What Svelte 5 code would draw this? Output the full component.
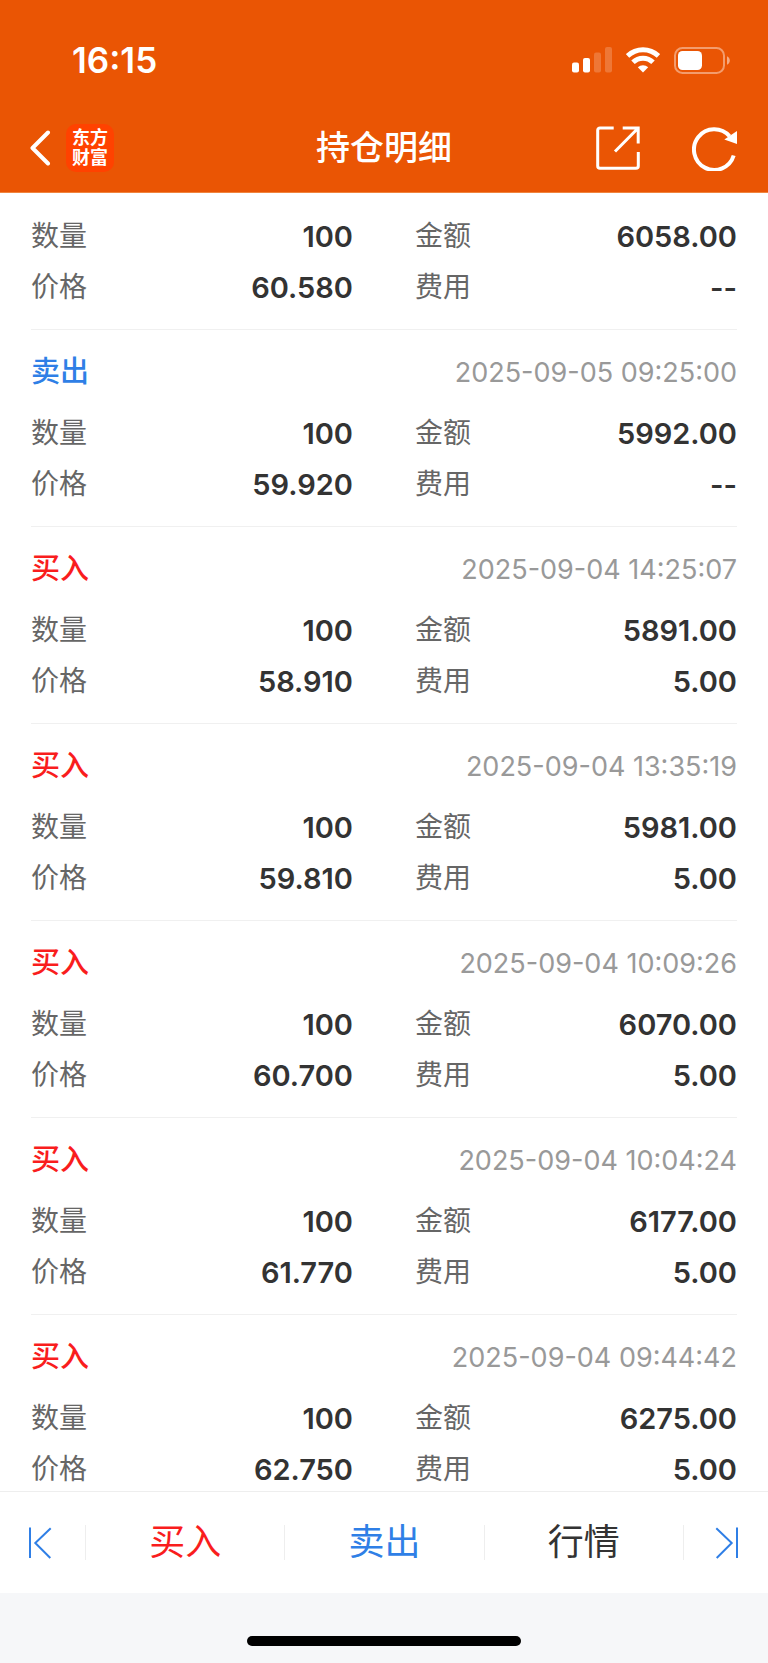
<script lang="ts">
	type Side = 'buy' | 'sell';
	interface Trade {
		side?: Side;
		time?: string;
		qty: string;
		price: string;
		amount: string;
		fee: string;
	}

	const sideLabel: Record<Side, string> = { buy: '买入', sell: '卖出' };

	const trades: Trade[] = [
		{ qty: '100', price: '60.580', amount: '6058.00', fee: '--' },
		{ side: 'sell', time: '2025-09-05 09:25:00', qty: '100', price: '59.920', amount: '5992.00', fee: '--' },
		{ side: 'buy', time: '2025-09-04 14:25:07', qty: '100', price: '58.910', amount: '5891.00', fee: '5.00' },
		{ side: 'buy', time: '2025-09-04 13:35:19', qty: '100', price: '59.810', amount: '5981.00', fee: '5.00' },
		{ side: 'buy', time: '2025-09-04 10:09:26', qty: '100', price: '60.700', amount: '6070.00', fee: '5.00' },
		{ side: 'buy', time: '2025-09-04 10:04:24', qty: '100', price: '61.770', amount: '6177.00', fee: '5.00' },
		{ side: 'buy', time: '2025-09-04 09:44:42', qty: '100', price: '62.750', amount: '6275.00', fee: '5.00' }
	];
</script>

<svelte:head>
	<title>持仓明细</title>
</svelte:head>

<div class="app">
	<header>
		<div class="status">
			<span class="clock">16:15</span>
			<div class="status-icons" aria-hidden="true">
				<svg width="40" height="26" viewBox="0 0 40 26" fill="#fff">
					<rect x="0" y="15.5" width="7" height="10" rx="2" />
					<rect x="11" y="11" width="7" height="14.5" rx="2" />
					<rect x="22" y="5.5" width="7" height="20" rx="2" opacity=".2" />
					<rect x="33" y="0" width="7" height="25.5" rx="2" opacity=".2" />
				</svg>
				<svg width="34" height="26" viewBox="0 0 34 26" fill="none" stroke="#fff">
					<path d="M1.500 8.900a22.300 22.300 0 0 1 31 0" stroke-width="5" />
					<path d="M7 15.300a14.400 14.400 0 0 1 20 0" stroke-width="5" />
					<path d="M17 25.500l-5.200-5.200a7.600 7.600 0 0 1 10.400 0z" fill="#fff" stroke="none" />
				</svg>
				<svg width="56" height="27" viewBox="0 0 56 27">
					<rect x="1" y="1" width="49" height="25" rx="7.5" fill="none" stroke="#fff" stroke-width="2" opacity=".42" />
					<rect x="4" y="4" width="24" height="19" rx="4.5" fill="#fff" />
					<path d="M53 9.2v8.6c1.8-.8 2.8-2.4 2.8-4.3S54.8 10 53 9.2z" fill="#fff" opacity=".5" />
				</svg>
			</div>
		</div>

		<div class="titlebar">
			<div class="side">
				<button class="icon-btn" aria-label="返回">
					<svg width="22" height="36" viewBox="0 0 22 36" fill="none" stroke="#fff" stroke-width="4" stroke-linecap="round" stroke-linejoin="round">
						<path d="M18 2.500 2.500 18 18 33.500" />
					</svg>
				</button>
				<a class="logo" href="#home"><span>东方</span><span>财富</span></a>
			</div>
			<h1>持仓明细</h1>
			<div class="side tools">
				<button class="icon-btn" aria-label="分享">
					<svg width="44" height="44" viewBox="0 0 44 44" fill="none" stroke="#fff" stroke-width="3">
						<path d="M17.700 2H4a2.300 2.300 0 0 0-2.300 2.300V40a2.300 2.300 0 0 0 2.300 2.300h36a2.300 2.300 0 0 0 2.300-2.300V26" />
						<path d="M26.700 2h15.500v15.500M41.500 2.700 19 25.500" />
					</svg>
				</button>
				<button class="icon-btn" aria-label="刷新">
					<svg width="46" height="46" viewBox="0 0 46 46">
						<path d="M37.600 11.300A20.300 20.300 0 1 0 41.700 30.500" fill="none" stroke="#fff" stroke-width="4" />
						<path d="M45 6v13L32.300 14.500z" fill="#fff" />
					</svg>
				</button>
			</div>
		</div>
	</header>

	<main>
		{#each trades as t}
			<article>
				{#if t.side}
					<div class="head">
						<h2 class={t.side}>{sideLabel[t.side]}</h2>
						<time>{t.time}</time>
					</div>
				{/if}
				<dl>
					<div><dt>数量</dt><dd>{t.qty}</dd></div>
					<div><dt>金额</dt><dd>{t.amount}</dd></div>
					<div><dt>价格</dt><dd>{t.price}</dd></div>
					<div><dt>费用</dt><dd>{t.fee}</dd></div>
				</dl>
			</article>
		{/each}
	</main>

	<nav>
		<button class="edge" aria-label="上一个">
			<svg width="24" height="32" viewBox="0 0 24 32" fill="none" stroke="#2f7fe6" stroke-width="2">
				<path d="M2 .5V31M22.700 1.200 7.300 16l15 15" />
			</svg>
		</button>
		<button class="buy">买入</button>
		<button class="sell">卖出</button>
		<button>行情</button>
		<button class="edge" aria-label="下一个">
			<svg width="24" height="32" viewBox="0 0 24 32" fill="none" stroke="#2f7fe6" stroke-width="2">
				<path d="M22 .5V31M1.300 1.200 16.700 16l-15 15" />
			</svg>
		</button>
	</nav>
	<div class="home"><span></span></div>
</div>

<style>
	:global(body) {
		background: #fff;
	}
	.app {
		display: flex;
		flex-direction: column;
		height: 100vh;
		font-family: Inter, 'Noto Sans CJK SC', sans-serif;
		color: #333;
	}
	button {
		padding: 0;
		border: 0;
		background: none;
		color: inherit;
		font: inherit;
		cursor: pointer;
	}
	svg {
		display: block;
	}
	h1,
	h2,
	dl,
	dd {
		margin: 0;
	}

	header {
		flex: none;
		background: #ea5504;
		border-bottom: 1px solid #f0853f;
		color: #fff;
	}
	.status {
		display: flex;
		align-items: center;
		justify-content: space-between;
		height: 76px;
		padding: 22px 38px 6px 72px;
	}
	.clock {
		font-size: 35px;
		font-weight: 600;
		line-height: 40px;
	}
	.status-icons {
		display: flex;
		align-items: center;
		gap: 14px;
	}
	.titlebar {
		display: grid;
		grid-template-columns: 1fr auto 1fr;
		align-items: center;
		height: 88px;
		padding: 0 30px;
	}
	.side {
		display: flex;
		align-items: center;
		gap: 14px;
	}
	.tools {
		justify-content: flex-end;
		gap: 52px;
	}
	.logo {
		display: flex;
		flex-direction: column;
		align-items: center;
		justify-content: center;
		width: 48px;
		height: 48px;
		border-radius: 10px;
		background: #ff4200;
		color: #fff;
		font-size: 18px;
		font-weight: 700;
		line-height: 20px;
		text-decoration: none;
	}
	h1 {
		font-size: 34px;
		font-weight: 500;
		line-height: 48px;
	}

	main {
		flex: 1;
		min-height: 0;
		padding: 0 31px;
		overflow-y: auto;
		scrollbar-width: none;
	}
	article {
		padding: 18px 0 16px;
		border-bottom: 1px solid #f0f0f0;
	}
	.head {
		display: flex;
		align-items: center;
		justify-content: space-between;
		height: 48px;
		margin-bottom: 12px;
	}
	h2 {
		font-size: 29px;
		font-weight: 500;
		line-height: 48px;
	}
	time {
		color: #999;
		font-size: 27px;
	}
	dl {
		display: grid;
		grid-template-columns: 1fr 1fr;
		column-gap: 62px;
	}
	dl div {
		display: flex;
		justify-content: space-between;
		line-height: 51px;
	}
	dt {
		color: #666;
		font-size: 28px;
	}
	dd {
		font-size: 29px;
		font-weight: 600;
	}
	.buy {
		color: #f91d1d;
	}
	.sell {
		color: #2f7fe6;
	}

	nav {
		display: flex;
		flex: none;
		align-items: center;
		height: 101px;
		border-top: 1px solid #eee;
		background: #fff;
	}
	nav button {
		flex: 1;
		height: 35px;
		font-size: 36px;
		line-height: 35px;
	}
	nav button + button {
		border-left: 1px solid #eee;
	}
	nav .edge {
		display: flex;
		flex: 0 0 85px;
		align-items: center;
		padding-left: 28px;
	}
	nav .edge:last-child {
		justify-content: flex-end;
		padding: 0 29px 0 0;
	}
	.home {
		display: flex;
		flex: none;
		align-items: flex-end;
		justify-content: center;
		height: 53px;
		padding-bottom: 17px;
		background: #f6f7f9;
	}
	.home span {
		width: 274px;
		height: 10px;
		border-radius: 5px;
		background: #000;
	}
</style>
